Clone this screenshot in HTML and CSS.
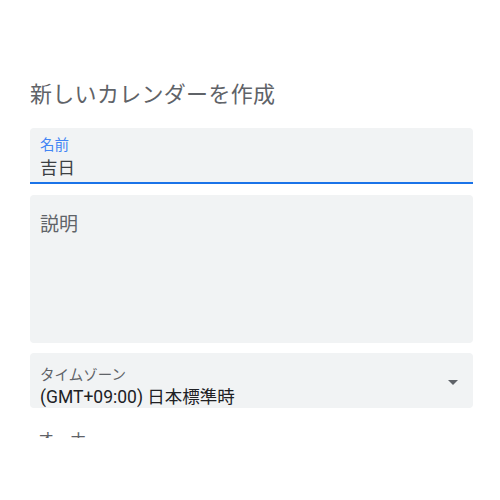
FILE: index.html
```html
<!DOCTYPE html>
<html lang="ja">
<head>
<meta charset="utf-8">
<link rel="stylesheet" href="styles.css">
</head>
<body>
<div class="page">
  <h1 class="title">新しいカレンダーを作成</h1>
  <div class="field field-active">
    <div class="label label-blue">名前</div>
    <div class="value">吉日</div>
  </div>
  <div class="field field-area">
    <div class="placeholder">説明</div>
  </div>
  <div class="field field-select">
    <div class="select-text">
      <div class="label">タイムゾーン</div>
      <div class="value value-dark">(GMT+09:00) 日本標準時</div>
    </div>
    <svg class="arrow" width="10" height="5" viewBox="0 0 10 5"><path d="M0 0h10L5 5z" fill="#5f6368"/></svg>
  </div>
  <div class="owner">オーナー</div>
</div>
</body>
</html>
```
FILE: styles.css
```css
* { box-sizing: border-box; }
html, body { margin: 0; padding: 0; background: #fff; }
body {
  font-family: Roboto, "Noto Sans CJK JP", sans-serif;
  width: 500px;
  height: 500px;
}
.page {
  height: 438px;
  overflow: hidden;
  padding: 81px 27px 0 30px;
  display: flex;
  flex-direction: column;
}
.title {
  margin: 0 0 19px;
  font-size: 22px;
  letter-spacing: 0.3px;
  line-height: 28px;
  font-weight: 400;
  color: #5f6368;
}
.field {
  background: #f1f3f4;
  border-radius: 4px;
  padding: 10px 10px 0;
  flex-shrink: 0;
}
.field-active {
  height: 56px;
  border-radius: 4px 4px 0 0;
  border-bottom: 2px solid #1a73e8;
  margin-bottom: 11px;
}
.label {
  font-size: 14.5px;
  line-height: 16px;
  color: #5f6368;
}
.label-blue { color: #4285f4; }
.value {
  margin-top: 2px;
  font-size: 17.5px;
  line-height: 24px;
  color: #3c4043;
}
.value-dark { color: #202124; margin-top: 1px; }
.field-area {
  height: 148px;
  padding-top: 18px;
  margin-bottom: 10px;
}
.placeholder {
  font-size: 19px;
  line-height: 24px;
  color: #5f6368;
}
.field-select {
  height: 55px;
  display: flex;
  align-items: flex-start;
  justify-content: space-between;
  padding: 15px 15px 0 10px;
}
.arrow { margin-top: 12px; }
.owner {
  margin-top: 20px;
  padding-left: 8px;
  font-size: 16px;
  line-height: 24px;
  color: #5f6368;
}
```
